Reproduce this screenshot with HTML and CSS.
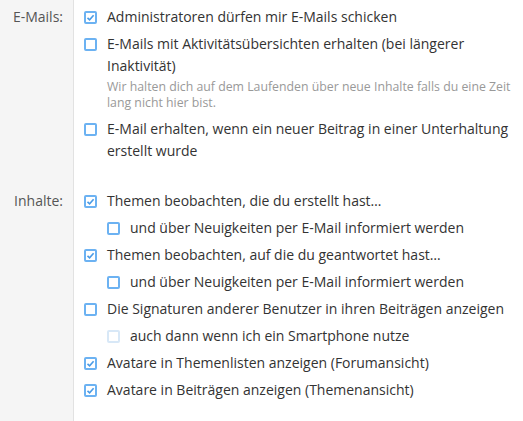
FILE: index.html
```html
<!DOCTYPE html>
<html lang="de">
<head>
<meta charset="utf-8">
<title>Einstellungen</title>
<link rel="stylesheet" href="styles.css">
</head>
<body>
<div class="form">
  <section class="group">
    <div class="label">E-Mails:</div>
    <div class="options">
      <div class="opt"><span class="cb checked"><svg viewBox="0 0 9 9"><path d="M1.5 4.8 L3.6 6.8 L7.6 2.2"/></svg></span><span class="txt">Administratoren dürfen mir E-Mails schicken</span></div>
      <div class="opt"><span class="cb"></span><div class="txt">E-Mails mit Aktivitätsübersichten erhalten (bei längerer Inaktivität)<p class="hint">Wir halten dich auf dem Laufenden über neue Inhalte falls du eine Zeit lang nicht hier bist.</p></div></div>
      <div class="opt"><span class="cb"></span><span class="txt">E-Mail erhalten, wenn ein neuer Beitrag in einer Unterhaltung erstellt wurde</span></div>
    </div>
  </section>
  <section class="group">
    <div class="label">Inhalte:</div>
    <div class="options">
      <div class="opt"><span class="cb checked"><svg viewBox="0 0 9 9"><path d="M1.5 4.8 L3.6 6.8 L7.6 2.2"/></svg></span><span class="txt">Themen beobachten, die du erstellt hast…</span></div>
      <div class="opt sub"><span class="cb"></span><span class="txt">und über Neuigkeiten per E-Mail informiert werden</span></div>
      <div class="opt"><span class="cb checked"><svg viewBox="0 0 9 9"><path d="M1.5 4.8 L3.6 6.8 L7.6 2.2"/></svg></span><span class="txt">Themen beobachten, auf die du geantwortet hast…</span></div>
      <div class="opt sub"><span class="cb"></span><span class="txt">und über Neuigkeiten per E-Mail informiert werden</span></div>
      <div class="opt"><span class="cb"></span><span class="txt">Die Signaturen anderer Benutzer in ihren Beiträgen anzeigen</span></div>
      <div class="opt sub"><span class="cb disabled"></span><span class="txt">auch dann wenn ich ein Smartphone nutze</span></div>
      <div class="opt"><span class="cb checked"><svg viewBox="0 0 9 9"><path d="M1.5 4.8 L3.6 6.8 L7.6 2.2"/></svg></span><span class="txt">Avatare in Themenlisten anzeigen (Forumansicht)</span></div>
      <div class="opt"><span class="cb checked"><svg viewBox="0 0 9 9"><path d="M1.5 4.8 L3.6 6.8 L7.6 2.2"/></svg></span><span class="txt">Avatare in Beiträgen anzeigen (Themenansicht)</span></div>
    </div>
  </section>
</div>
</body>
</html>
```
FILE: styles.css
```css
html, body {
  margin: 0;
  padding: 0;
}
body {
  min-height: 100vh;
  background: linear-gradient(to right, #f5f5f5 0, #f5f5f5 73px, #e2e2e2 73px, #e2e2e2 74px, #ffffff 74px);
  font-family: "Open Sans", "Noto Sans", sans-serif;
  font-size: 14px;
  color: #333;
}
.form {
  display: flex;
  flex-direction: column;
  gap: 28px;
  padding-top: 6px;
}
.group {
  display: grid;
  grid-template-columns: 73px 1fr;
}
.label {
  text-align: right;
  padding-right: 10px;
  line-height: 22px;
  color: #555;
}
.options {
  display: flex;
  flex-direction: column;
  gap: 5px;
  padding-left: 11px;
  padding-right: 8px;
}
.opt {
  display: flex;
  align-items: flex-start;
  gap: 10px;
  line-height: 22px;
}
.opt.sub {
  margin-left: 23px;
}
.cb {
  flex: none;
  box-sizing: border-box;
  width: 13px;
  height: 13px;
  margin-top: 5px;
  border: 2px solid #6cb2f2;
  border-radius: 2px;
  background: #fff;
  display: flex;
  align-items: center;
  justify-content: center;
}
.cb svg {
  width: 9px;
  height: 9px;
  fill: none;
  stroke: #4a9be6;
  stroke-width: 1.6;
}
.cb.disabled {
  border-color: #d8e8f7;
}
.hint {
  margin: 2px 0 2px;
  font-size: 12.3px;
  line-height: 16px;
  color: #999;
}
```
